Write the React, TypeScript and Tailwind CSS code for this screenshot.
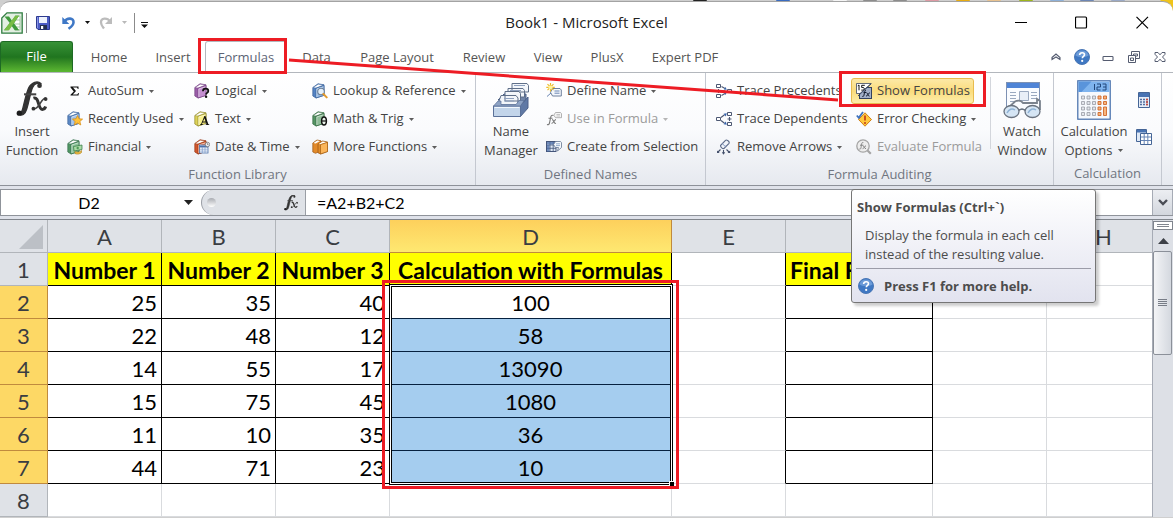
import type { ReactNode } from "react";

/* ---------- icons ---------- */

function Book({ front, side, edge, children }: { front: string; side: string; edge: string; children?: ReactNode }) {
  return (
    <svg viewBox="0 0 16 16" className="h-4 w-4 shrink-0" aria-hidden="true">
      <path d="M.8 4.500 6 .8 12 1.800v10.400L4 15 .8 13z" fill={side} stroke={edge} strokeWidth=".7" />
      <path d="M1.200 4.600 6.200 1.200l5.200.9-7.200 2.900z" fill="#fff" stroke={edge} strokeWidth=".4" />
      <path d="M4 5.200 12 2.600v9.800L4 15z" fill={front} stroke={edge} strokeWidth=".7" />
      <path d="M4.800 6 11.400 3.800M4.800 6v8" stroke="#fff" strokeOpacity=".6" strokeWidth=".8" fill="none" />
      {children}
    </svg>
  );
}

const icons: Record<string, ReactNode> = {
  sum: (
    <svg viewBox="0 0 16 16" className="h-4 w-4 shrink-0" aria-hidden="true">
      <path d="M3.500 3.500h8v2.400h-.8c-.2-1-.6-1.400-1.500-1.400H6l3 3.400-3.200 3.600h3.600c1 0 1.400-.5 1.700-1.500h.8l-.4 2.500h-8v-.8L6.800 8.400 3.500 4.400z" fill="#111" />
    </svg>
  ),
  recent: (
    <Book front="#9dc0ea" side="#5c88c4" edge="#3c649c">
      <path d="m10.500 4.500 1.500 3.300 3.600.3-2.700 2.400.9 3.500-3.300-1.900L7.300 14l.8-3.500L5.400 8.100 9 7.800z" fill="#ffc13a" stroke="#d98a0c" strokeWidth=".7" />
    </Book>
  ),
  financial: (
    <Book front="#8dc49a" side="#4f9563" edge="#35704a">
      <path d="M6.500 7.500 15 6v4.500L7 12z" fill="#a9dba6" stroke="#2f7440" strokeWidth=".7" />
      <circle cx="10.700" cy="9" r="1.200" fill="#4f9b57" />
      <path d="M8 12.500c1.500 1 5 .8 6.500-1v2c-1.500 1.800-5 2-6.500 1z" fill="#f0c14b" stroke="#a87812" strokeWidth=".6" />
    </Book>
  ),
  logical: (
    <Book front="#c48fd0" side="#9a5da8" edge="#744282">
      <path d="M8.900 8.300C9 6.300 10.200 5.700 11.500 5.700c1.800 0 2.800.9 2.800 2.200 0 1.900-2.200 2-2.200 3.500" fill="none" stroke="#111" strokeWidth="1.800" />
      <circle cx="12.100" cy="13.800" r="1.200" fill="#111" />
    </Book>
  ),
  text: (
    <Book front="#f8f08a" side="#ddd258" edge="#8e8629">
      <path d="m6 14 .2-.7h.8L10.400 5h1l3 8.300h.8V14h-3.500v-.7h.8l-.6-1.800H8.600l-.7 1.800h.9V14zm3-3.400h2.600l-1.200-3.400z" fill="#111" />
    </Book>
  ),
  date: (
    <Book front="#ef8457" side="#d2562d" edge="#963715">
      <rect x="5.500" y="6" width="8.500" height="8" fill="#fff" stroke="#4d71ab" strokeWidth=".8" />
      <path d="M5.500 7.500H14" stroke="#4d71ab" strokeWidth="2" />
      <path d="M6 10.200h8M6 12.100h8M8.300 8v6M11 8v6" stroke="#7b9bcc" strokeWidth=".7" />
      <circle cx="13.500" cy="5.500" r="2.200" fill="#f2f4f8" stroke="#666" strokeWidth=".7" />
      <path d="M13.500 4.300v1.300h1" stroke="#444" strokeWidth=".6" fill="none" />
    </Book>
  ),
  lookup: (
    <Book front="#93b8e4" side="#5584c4" edge="#375f98">
      <circle cx="9" cy="8.500" r="3.300" fill="#e4f0fb" stroke="#6d7f96" strokeWidth="1.100" />
      <path d="m11.400 11 3.300 3.400" stroke="#e39a2d" strokeWidth="2" strokeLinecap="round" />
    </Book>
  ),
  math: (
    <Book front="#8fbd98" side="#559464" edge="#32693f">
      <ellipse cx="12" cy="10" rx="2.400" ry="4" fill="#e9f3ea" stroke="#111" strokeWidth="1.500" />
      <path d="M9.800 10h4.400" stroke="#111" strokeWidth="1.200" />
    </Book>
  ),
  more: (
    <svg viewBox="0 0 16 16" className="h-4 w-4 shrink-0" aria-hidden="true">
      <path d="M.8 4 5 1l4 .8V12l-5.500 2.300L.8 13z" fill="#e28a2a" stroke="#9b5510" strokeWidth=".7" />
      <path d="M1.500 4 5.200 1.500 8 2 3.600 4.400z" fill="#fff" />
      <path d="M6 5 10.500 2l5 1v9.500L8.500 15 6 13.800z" fill="#e08c2b" stroke="#9b5510" strokeWidth=".7" />
      <path d="m6.700 5 4-2.500 3.800.7-5.800 2z" fill="#fff" />
      <path d="m8.500 5.600 7-2.300v9.300L8.500 15z" fill="#fbb55a" stroke="#a35d12" strokeWidth=".7" />
    </svg>
  ),
  define: (
    <svg viewBox="0 0 16 16" className="h-4 w-4 shrink-0" aria-hidden="true">
      <path d="M6.500 5.500h7.500l1.300 1.500v6H6.500L4.500 9.300z" fill="#f4f8fd" stroke="#5f7391" strokeWidth=".9" />
      <path d="M8.500 8h5M8.500 10.200h5M1 13.500 5 10" stroke="#5a78a8" strokeWidth=".9" />
      <path d="M4.500 0v8.500M.3 4.300h8.500M1.500 1.200l6 6M7.500 1.200l-6 6" stroke="#eebc2b" strokeWidth="1.200" />
      <circle cx="4.500" cy="4.300" r="1.900" fill="#fff59b" />
    </svg>
  ),
  use: (
    <svg viewBox="0 0 16 16" className="h-4 w-4 shrink-0" aria-hidden="true">
      <path d="M7.500 4.500c-1.900-.9-2.600.3-2.900 2.100L3.500 12c-.4 1.600-1.200 2-2.500 1.400M2.500 7.200h4M6 8.500c2 0 1.500 4.500 4 4M10 8.500c-1.500 0-2.500 4-4.500 4" fill="none" stroke="#7c7c7c" strokeWidth="1.100" />
      <path d="M9.500 1.500h5l1 1.200v4H9.500L7.800 4.200z" fill="#f5f5f5" stroke="#a0a0a0" strokeWidth=".8" />
      <path d="M10.500 3.500h3.500M10.500 5H14" stroke="#b0b0b0" strokeWidth=".7" />
    </svg>
  ),
  create: (
    <svg viewBox="0 0 16 16" className="h-4 w-4 shrink-0" aria-hidden="true">
      <rect x=".5" y="2.500" width="9.500" height="10" fill="#dfe9f6" stroke="#44557a" />
      <path d="M1 6h9M1 9.300h9M4 3v9.500M7.200 3v9.500" stroke="#44557a" strokeWidth=".8" />
      <path d="M1 3h9v2.500H1zM1 6h2.500v6.500H1z" fill="#4a6ba5" fillOpacity=".75" />
      <path d="M9.500 2.500h5l1 1.200v4.800l-4 3.500 1-3.500h-3L7.500 5.600z" fill="#f5f8fc" stroke="#62738f" strokeWidth=".8" />
      <path d="M10 4.800h4M10 6.600h4" stroke="#6c8bb9" strokeWidth=".7" />
    </svg>
  ),
  precedents: (
    <svg viewBox="0 0 16 16" className="h-4 w-4 shrink-0" aria-hidden="true">
      <g fill="#fff" stroke="#4d5873"><path d="M.5 1.500h4v3h-4zM.5 11.500h4v3h-4zM11.500 6.500h4v3h-4z" /></g>
      <path d="M.5 8h4M2.500 6v4M5.500 3.500 9 5.500M5.500 12.500 9 10.500M6 8h3" stroke="#4d5873" strokeWidth="1.100" />
      <path d="m10.800 6.800-3-.3 1.700-2.500zM10.800 9.300l-1.300 2.700-1.700-2.500z" fill="#3763ab" />
    </svg>
  ),
  dependents: (
    <svg viewBox="0 0 16 16" className="h-4 w-4 shrink-0" aria-hidden="true">
      <g fill="#fff" stroke="#4d5873"><path d="M.5 6.500h4v3h-4zM11.500 1.500h4v3h-4zM11.500 11.500h4v3h-4z" /></g>
      <path d="M11.500 8h4M13.500 6v4M5 6.500 8.500 3.800M5 9.500l3.500 2.700" stroke="#4d5873" strokeWidth="1.100" />
      <path d="m10.800 2.300-1 3.200L7.600 2.800zM10.800 13.700l-3.200-.5 2.200-2.700z" fill="#3763ab" />
    </svg>
  ),
  remove: (
    <svg viewBox="0 0 16 16" className="h-4 w-4 shrink-0" aria-hidden="true">
      <path d="m4.500 6.500 5-5.200c1-1 4.500 1.200 3.500 3L8 9.500c-1.500.5-3.500-1.300-3.500-3z" fill="#f1f4fa" stroke="#5d6b89" strokeWidth="1.100" />
      <path d="M6.500 4.500c1 1.800 2 2.500 3.800 3" fill="none" stroke="#7d93bd" />
      <path d="M4.500 10.500 1.500 13.500M7.500 11v3.500M10.500 10.500l3 3" stroke="#44506b" strokeWidth="1.100" />
      <path d="M1 11.500V14h2.700zM5.800 13.300h3.400L7.500 15.800zM14.200 11.500V14h-2.700z" fill="#44506b" />
    </svg>
  ),
  show: (
    <svg viewBox="0 0 16 16" className="h-4 w-4 shrink-0" aria-hidden="true">
      <rect x="3.500" y="4.500" width="12" height="11" fill="#a3b0c8" stroke="#33415c" />
      <path d="M.5.500h14.500L4 10.500H.5z" fill="#fff" stroke="#3e4961" strokeWidth=".8" />
      <path d="M1.800 2.800 3 2v5.300M8.800 2.300H5.700v2.200h1.200c2 0 1.900 2.600-.2 2.600H5.300" fill="none" stroke="#111" strokeWidth="1" />
      <path d="M15.500.5 2 13" stroke="#33415c" strokeWidth=".9" />
      <path d="M10 7.500c-1.300-.3-1.300 1.200-2 4.500-.2 1.300-.7 1.700-1.700 1.400M7.500 9.500h2.700M10.500 9.800c1.500 0 1.200 3.500 3 3.300M13.800 9.800c-1.500 0-2 3.300-3.700 3.300" fill="none" stroke="#111a2c" strokeWidth="1" />
    </svg>
  ),
  error: (
    <svg viewBox="0 0 16 16" className="h-4 w-4 shrink-0" aria-hidden="true">
      <path d="m9 1.800 6.500 6.700L9 15.200 2.500 8.500z" fill="#ffc83d" stroke="#cf7f16" />
      <path d="M9 4.500v5" stroke="#c23b16" strokeWidth="1.700" />
      <circle cx="9" cy="11.900" r="1" fill="#c23b16" />
      <path d="m.8 4.500 2 2.300L7 1" fill="none" stroke="#3e72bd" strokeWidth="1.800" />
    </svg>
  ),
  evaluate: (
    <svg viewBox="0 0 16 16" className="h-4 w-4 shrink-0" aria-hidden="true">
      <circle cx="7" cy="7" r="6.200" fill="#ededed" stroke="#a4a4a4" strokeWidth="1.300" />
      <path d="m11.500 11.500 3.300 3.300" stroke="#a4a4a4" strokeWidth="2.200" />
      <path d="M7.300 3.500C5.500 3 5.700 5 5 8.700c-.3 1.400-.8 1.600-1.700 1.300M4 6.200h3.300M6.800 6.800c1.700 0 1.200 3 3.200 2.800M10 6.800c-1.500 0-1.800 2.900-3.400 2.900" fill="none" stroke="#858585" />
    </svg>
  ),
};

function Caret({ light = false }: { light?: boolean }) {
  return (
    <svg viewBox="0 0 5 3" className="h-[3px] w-[5px] shrink-0" aria-hidden="true">
      <path d="M0 0h5L2.500 3z" fill={light ? "#b5b5b5" : "#5c5c5c"} />
    </svg>
  );
}

function HelpIcon() {
  return (
    <svg viewBox="0 0 16 16" className="h-4 w-4 shrink-0" aria-hidden="true">
      <circle cx="8" cy="8" r="7.500" fill="#3f78c3" stroke="#4a77b5" />
      <path d="M1.500 6.500a6.700 6.700 0 0 1 13 0C11 8.500 5 8.500 1.500 6.500z" fill="#6c9bd8" />
      <path d="M5.600 6c.1-1.600 1.200-2.300 2.500-2.300 1.400 0 2.400.8 2.400 2 0 1.700-2.200 1.800-2.200 3.600" fill="none" stroke="#fff" strokeWidth="1.600" />
      <circle cx="8.200" cy="11.900" r="1.100" fill="#fff" />
    </svg>
  );
}

function FxIcon({ className }: { className: string }) {
  return (
    <svg viewBox="0 0 34 38" className={className} aria-hidden="true">
      <path d="M26 3.500c-1.200-2.500-6-2.800-8.500 3C15 12.500 14 21 11.500 29 10 34.500 6 37 2.500 34.500l.5-1c2 .5 3.500-1.500 4.500-6C9.500 19 11 12 13.500 6.500 16.500.5 23-1.500 26.500 2z" fill="#333" stroke="#333" strokeWidth="1.400" />
      <circle cx="25" cy="4.300" r="2.500" fill="#333" />
      <circle cx="3.500" cy="33.500" r="2.800" fill="#1d1d1d" />
      <path d="M8.500 13.500h13" stroke="#444" strokeWidth="2.200" />
      <path d="M18.500 17.500c6.500-2 4.500 12 9.500 12 1.800 0 3-1.500 3.500-3" fill="none" stroke="#333" strokeWidth="3.200" />
      <path d="M32 17.500c-5-1.500-7.500 13-13.500 11.500" fill="none" stroke="#444" strokeWidth="1.700" />
      <circle cx="31.500" cy="18.500" r="2" fill="#333" />
      <circle cx="18.500" cy="28.800" r="2" fill="#333" />
    </svg>
  );
}

/* ---------- title bar ---------- */

function TitleBar() {
  return (
    <header className="relative flex h-[39px] items-center px-px pt-0.5">
      <svg viewBox="0 0 22 22" className="h-[22px] w-[22px]" aria-hidden="true">
        <path d="M6 .8h15.200v20.400H.8V6z" fill="#e3efe2" stroke="#2f7d40" strokeWidth="1.300" />
        <path d="M14 4h5v14h-5M14 8h5M14 12h5M14 15h5" stroke="#94bd94" fill="#fff" strokeWidth=".8" />
        <path d="M3.500 4.500H8l3 4.300 3.300-5H18l-5 7.400 5.200 7H13.700l-3-4.300-3.200 4.300H3L8.800 11z" fill="#3f9a3d" />
        <path d="M14.300 3.800H18L8 18.200H3z" fill="#79bd45" />
      </svg>
      <span className="ml-[3px] h-5 w-px bg-[#8b8b8b]" />
      <button type="button" aria-label="Save" className="ml-[9px]">
        <svg viewBox="0 0 14 14" className="h-[14px] w-[14px]" aria-hidden="true">
          <path d="M.5.500h13v13H2L.5 12z" fill="#4c5cc4" stroke="#2d3a8e" />
          <path d="M3 1h8v6H3z" fill="#eef2fc" />
          <path d="M1.500 1v11" stroke="#8794e6" />
          <path d="M4 9h7v4.500H4z" fill="#25304f" />
          <path d="M5 10h2.200v3H5z" fill="#fff" />
        </svg>
      </button>
      <button type="button" aria-label="Undo" className="ml-[12px]">
        <svg viewBox="0 0 14 14" className="h-[14px] w-[14px]" aria-hidden="true">
          <path d="M2.500 5.500C5 1.500 12 1.500 11.500 6.500 11.300 9.500 9 11 6.500 12.800" fill="none" stroke="#3f78c6" strokeWidth="2.600" />
          <path d="M.3 1v7h7z" fill="#3f78c6" />
        </svg>
      </button>
      <svg viewBox="0 0 5 3" className="ml-[9px] h-[3px] w-[5px]" aria-hidden="true"><path d="M0 0h5L2.500 3z" fill="#111" /></svg>
      <button type="button" aria-label="Redo" className="ml-[9px]">
        <svg viewBox="0 0 14 14" className="h-[14px] w-[14px]" aria-hidden="true">
          <path d="M11 5.500C8.500 1.500 1.800 1.500 2 6.500c.2 3 1.500 4 3 6" fill="none" stroke="#bcbcbc" strokeWidth="2.300" />
          <path d="M13 1v7H6z" fill="#bcbcbc" />
        </svg>
      </button>
      <svg viewBox="0 0 5 3" className="ml-[9px] h-[3px] w-[5px]" aria-hidden="true"><path d="M0 0h5L2.500 3z" fill="#b9b9b9" /></svg>
      <span className="ml-[7px] h-5 w-px bg-[#8b8b8b]" />
      <button type="button" aria-label="Customize Quick Access Toolbar" className="ml-[6px] pt-1">
        <svg viewBox="0 0 7 6" className="h-[6px] w-[7px]" aria-hidden="true"><path d="M0 0h7v1H0zM0 2.500h7L3.500 6z" fill="#111" /></svg>
      </button>
      <h1 className="pointer-events-none absolute inset-x-0 top-2.5 text-center text-[15px] leading-[20px] text-[#222]">Book1 - Microsoft Excel</h1>
      <div className="ml-auto flex items-center gap-12 pr-[23px]">
        <button type="button" aria-label="Minimize">
          <svg viewBox="0 0 13 13" className="h-[13px] w-[13px]" aria-hidden="true"><path d="M1 6.500h12" stroke="#000" /></svg>
        </button>
        <button type="button" aria-label="Maximize">
          <svg viewBox="0 0 13 13" className="h-[13px] w-[13px]" aria-hidden="true"><rect x=".5" y="1" width="11" height="11" rx="1" fill="none" stroke="#000" strokeWidth="1.200" /></svg>
        </button>
        <button type="button" aria-label="Close">
          <svg viewBox="0 0 13 13" className="h-[13px] w-[13px]" aria-hidden="true"><path d="m.5.800 11.500 11.500m0-11.500-11.500 11.500" stroke="#000" strokeWidth="1.200" /></svg>
        </button>
      </div>
    </header>
  );
}

/* ---------- tabs ---------- */

const tabs = [
  { name: "Home", w: "w-[64px]" },
  { name: "Insert", w: "w-[64px]" },
  { name: "Formulas", w: "w-[82px]" },
  { name: "Data", w: "w-[59px]" },
  { name: "Page Layout", w: "w-[102px]" },
  { name: "Review", w: "w-[72px]" },
  { name: "View", w: "w-[56px]" },
  { name: "PlusX", w: "w-[62px]" },
  { name: "Expert PDF", w: "w-[94px]" },
];

function TabBar() {
  return (
    <nav className="flex h-8 items-end border-b border-[#b3b7bd] text-[13px] text-[#555]">
      <button type="button" className="mr-1 h-[31px] w-[73px] rounded-t-[3px] border border-b-0 border-[#1d6a24] bg-linear-to-b from-[#379237] via-[#20751f] to-[#5cb832] text-white">
        File
      </button>
      {tabs.map((t) => (
        <div key={t.name} className={`relative flex h-[31px] ${t.w}`}>
          <button
            type="button"
            className={`w-full pt-0.5 ${t.name === "Formulas" ? "rounded-t-[3px] border border-b-0 border-[#b3b7bd] bg-white text-[#5c6475]" : ""}`}
          >
            {t.name}
          </button>
          {t.name === "Formulas" && <span className="pointer-events-none absolute -top-[3px] -left-[7px] z-10 h-[36px] w-[89px] border-3 border-[#ed1c24]" />}
        </div>
      ))}
      <div className="mb-[7px] ml-auto flex items-center gap-[10px] pr-[5px]">
        <button type="button" aria-label="Minimize the Ribbon">
          <svg viewBox="0 0 16 16" className="h-4 w-4" aria-hidden="true"><path d="M4 8.500 8 5l4 3.500v2L8 8l-4 2.500z" fill="#fff" stroke="#555c70" strokeWidth="1.100" /></svg>
        </button>
        <button type="button" aria-label="Help"><HelpIcon /></button>
        <button type="button" aria-label="Minimize Window">
          <svg viewBox="0 0 16 16" className="h-4 w-4" aria-hidden="true"><rect x="3" y="7.500" width="10" height="4" rx=".8" fill="#fff" stroke="#555c70" strokeWidth="1.100" /></svg>
        </button>
        <button type="button" aria-label="Restore Window">
          <svg viewBox="0 0 16 16" className="h-4 w-4" aria-hidden="true"><path d="M5.500 2.500h8v7h-8zM7.500 5h4v2h-4z" fill="#fff" stroke="#555c70" /><path d="M2.500 6.500h7v7h-7zM4.500 9h3v2.500h-3z" fill="#fff" stroke="#555c70" /></svg>
        </button>
        <button type="button" aria-label="Close Window">
          <svg viewBox="0 0 16 16" className="h-4 w-4" aria-hidden="true"><path d="M3 3.500h3l2 2.300 2-2.300h3v1.800L10.500 8l2.500 2.700v1.800h-3l-2-2.300-2 2.300H3v-1.800L5.500 8 3 5.300z" fill="#fff" stroke="#555c70" /></svg>
        </button>
      </div>
    </nav>
  );
}

/* ---------- ribbon ---------- */

function Command({ icon, label, caret = false, disabled = false }: { icon: string; label: string; caret?: boolean; disabled?: boolean }) {
  return (
    <button
      type="button"
      disabled={disabled}
      className={`flex h-7 items-center gap-[5px] whitespace-nowrap ${disabled ? "text-[#9b9b9b]" : "text-[#444]"}`}
    >
      {icons[icon]}
      <span>{label}</span>
      {caret && <Caret light={disabled} />}
    </button>
  );
}

function BigCommand({ label, width, caret = false, children }: { label: [string, string]; width: string; caret?: boolean; children: ReactNode }) {
  return (
    <button type="button" className={`flex shrink-0 flex-col items-center leading-[19px] text-[#444] ${width}`}>
      <span className="flex h-[45px] items-center">{children}</span>
      <span>{label[0]}</span>
      <span className="flex items-center gap-1.5">{label[1]}{caret && <Caret />}</span>
    </button>
  );
}

function Group({ title, width, children }: { title: string; width: string; children: ReactNode }) {
  return (
    <section className={`flex shrink-0 flex-col border-r border-[#c4c8d0] pt-1 ${width}`}>
      <div className="flex h-[84px]">{children}</div>
      <h2 className="pt-px text-center leading-[24px] text-[#70757f]">{title}</h2>
    </section>
  );
}

function Ribbon() {
  return (
    <div className="flex h-[113px] border-b border-[#8d9199] bg-linear-to-b from-white via-[#fafbfd] to-[#e6e9ef] text-[13px]">
      <Group title="Function Library" width="w-[476px]">
        <BigCommand label={["Insert", "Function"]} width="w-[64px]"><FxIcon className="h-[37px] w-[32px]" /></BigCommand>
        <div className="ml-[3px] w-[127px]">
          <Command icon="sum" label="AutoSum" caret />
          <Command icon="recent" label="Recently Used" caret />
          <Command icon="financial" label="Financial" caret />
        </div>
        <div className="w-[118px]">
          <Command icon="logical" label="Logical" caret />
          <Command icon="text" label="Text" caret />
          <Command icon="date" label="Date & Time" caret />
        </div>
        <div>
          <Command icon="lookup" label="Lookup & Reference" caret />
          <Command icon="math" label="Math & Trig" caret />
          <Command icon="more" label="More Functions" caret />
        </div>
      </Group>
      <Group title="Defined Names" width="w-[230px]">
        <BigCommand label={["Name", "Manager"]} width="w-[70px]">
          <svg viewBox="0 0 38 36" className="h-[36px] w-[38px]" aria-hidden="true">
            <path d="M6 18 12 12h22v8z" fill="#7185a8" stroke="#4c6189" />
            <g fill="#f3f6fa" stroke="#5f6f88">
              <path d="M20 1.500h15l1.500 2V10H20zM16 6.500h15l1.500 2V15H16z" />
              <path d="M13 9.500h14l1.500 2V19H13zM9 13.500h15l2 2.500V23H9l-2-4z" />
            </g>
            <path d="M22 3.500h11M18 8.500h11M12 16.500h10M12 19h10" stroke="#8fa1be" />
            <path d="m28 24 8-9v11l-8 9z" fill="#6079a5" stroke="#4c6189" />
            <path d="M1.500 24h27v10.500h-27z" fill="#c3d5ea" stroke="#5b7199" />
            <path d="M1.500 24 6 19h3v3.500h15l3-4h5L28.500 24z" fill="#8ea3c4" stroke="#5b7199" strokeWidth=".7" />
            <path d="M2.500 25.500h25" stroke="#f1f7fd" />
          </svg>
        </BigCommand>
        <div>
          <Command icon="define" label="Define Name" caret />
          <Command icon="use" label="Use in Formula" caret disabled />
          <Command icon="create" label="Create from Selection" />
        </div>
      </Group>
      <Group title="Formula Auditing" width="w-[348px]">
        <div className="ml-[10px] w-[135px]">
          <Command icon="precedents" label="Trace Precedents" />
          <Command icon="dependents" label="Trace Dependents" />
          <Command icon="remove" label="Remove Arrows" caret />
        </div>
        <div className="w-[139px]">
          <div className="relative flex h-7 items-center">
            <button type="button" className="flex h-[26px] w-[123px] items-center gap-[5px] rounded-[3px] border border-[#e8bc4e] bg-linear-to-b from-[#fce9a6] via-[#fbdc7c] to-[#fdeeaa] pl-1 whitespace-nowrap text-[#444]">
              {icons.show}
              <span>Show Formulas</span>
            </button>
            <span className="pointer-events-none absolute -top-[6px] -left-[12px] h-[36px] w-[147px] border-3 border-[#ed1c24]" />
          </div>
          <div className="pl-[5px]">
            <Command icon="error" label="Error Checking" caret />
            <Command icon="evaluate" label="Evaluate Formula" disabled />
          </div>
        </div>
        <div className="h-[72px] w-px bg-[#d3d6dc]" />
        <BigCommand label={["Watch", "Window"]} width="w-[62px]">
          <svg viewBox="0 0 40 38" className="h-[38px] w-[40px]" aria-hidden="true">
            <rect x="4.500" y="1.500" width="33" height="27" fill="#fafcff" stroke="#7d91b3" />
            <path d="M5 2h32v5H5z" fill="#4f84d6" />
            <path d="M8 11.500h6M8 14.500h6M8 17.500h6M8 20.500h6M29 11.500h6M29 14.500h6M29 17.500h6" stroke="#9aa9c0" />
            <path d="M17.500 10.500h9v9h-9z" fill="#e8eef7" stroke="#9aa9c0" />
            <path d="M5 28 13 20.500c4-2 7 0 8 1.500h14V18l3 2v9" fill="none" stroke="#7b838e" strokeWidth="1.800" />
            <ellipse cx="9.500" cy="30.500" rx="7.500" ry="6" fill="#d5e5f4" stroke="#69727e" strokeWidth="1.300" />
            <ellipse cx="30.500" cy="30.500" rx="7.500" ry="6" fill="#d5e5f4" stroke="#69727e" strokeWidth="1.300" />
            <path d="M17 29.500c2-2 4-2 6 0" fill="none" stroke="#69727e" strokeWidth="1.600" />
            <path d="M5 32c2-4 5-5 8-3M26 32c2-4 5-5 8-3" fill="none" stroke="#8fb3d6" strokeWidth="1.500" />
          </svg>
        </BigCommand>
      </Group>
      <Group title="Calculation" width="w-[108px]">
        <BigCommand label={["Calculation", "Options"]} width="w-[80px]" caret>
          <svg viewBox="0 0 34 40" className="h-[40px] w-[34px]" aria-hidden="true">
            <rect x=".8" y=".8" width="32.400" height="38.400" fill="#f6f9fd" stroke="#426ca9" strokeWidth="1.200" />
            <path d="M1.500 1.500h31v10.500h-31z" fill="#7fb4ee" />
            <path d="M1.500 1.500h13l-10 10.500h-3z" fill="#5994db" />
            <path d="M17.500 4v6M20 4h3.500v3H20v3h3.500M25.500 4H29v6h-3.500M26 7h3" fill="none" stroke="#23477b" />
            <g fill="#e3e6ec" stroke="#989ca5" strokeWidth=".8">
              <path d="M4.500 16h3v3h-3zM10 16h3v3h-3zM15.500 16h3v3h-3zM4.500 21.500h3v3h-3zM10 21.500h3v3h-3zM15.500 21.500h3v3h-3zM4.500 27h3v3h-3zM10 27h3v3h-3zM15.500 27h3v3h-3zM4.500 32.500h3v3h-3zM10 32.500h3v3h-3zM15.500 32.500h3v3h-3z" />
            </g>
            <path d="M21 16h3v3h-3zM26.500 16h3v3h-3zM21 21.500h3v3h-3zM26.500 21.500h3v3h-3zM21 27h3v3h-3zM26.500 27h3v8.500h-3zM21 32.500h3v3h-3z" fill="#f7b47c" stroke="#cf6a2c" strokeWidth=".9" />
          </svg>
        </BigCommand>
        <div className="flex w-5 flex-col items-center gap-[20px] pt-[14px]">
          <button type="button" aria-label="Calculate Now">
            <svg viewBox="0 0 16 18" className="h-[18px] w-[16px]" aria-hidden="true">
              <path d="M2.500 1.500h11v15h-11z" fill="#e6edf8" stroke="#456596" />
              <path d="M3 2h10v4H3z" fill="#4873b3" />
              <path d="M4 8.500h8M4 11h8M4 13.500h8" stroke="#5370a0" strokeWidth="1.400" strokeDasharray="2 1" />
              <path d="M10 8.500h2M10 11h2M10 13.500h2" stroke="#d04a3a" strokeWidth="1.400" />
            </svg>
          </button>
          <button type="button" aria-label="Calculate Sheet">
            <svg viewBox="0 0 16 16" className="h-4 w-4" aria-hidden="true">
              <path d="M.5.500h10v12H.5z" fill="#dfe9f6" stroke="#456596" />
              <path d="M1 1h9v2.500H1z" fill="#4873b3" />
              <path d="M4.500 4.500h11v11h-11z" fill="#fff" stroke="#456596" />
              <path d="M5 8h10M5 11.500h10M8.200 5v10M11.800 5v10" stroke="#6685b5" />
            </svg>
          </button>
        </div>
      </Group>
      <div className="flex-1" />
    </div>
  );
}

/* ---------- formula bar ---------- */

function FormulaBar() {
  return (
    <div className="bg-[#dfe2ea] pt-[3px] pb-[3px]">
      <div className="flex h-[27px] border-y border-[#8f939a] bg-white font-[Lato,'Liberation_Sans',sans-serif] text-[16px] text-black">
        <input aria-label="Name Box" defaultValue="D2" className="w-[177px] border-l border-[#8f939a] bg-transparent text-center outline-none" />
        <button type="button" aria-label="Name Box list" className="flex w-[24px] items-center justify-center pr-0.5">
          <svg viewBox="0 0 9 5" className="h-[5px] w-[9px]" aria-hidden="true"><path d="M0 0h9L4.500 5z" fill="#222" /></svg>
        </button>
        <div className="flex w-[105px] items-center justify-between rounded-l-full border-x border-[#9a9ea5] bg-[#dfe2e7] pr-[6px] pl-[5px]">
          <span className="h-[9px] w-[9px] rounded-full bg-linear-to-b from-[#a9acb2] to-white" />
          <button type="button" aria-label="Insert Function"><FxIcon className="h-[16px] w-[16px]" /></button>
        </div>
        <input aria-label="Formula" defaultValue="=A2+B2+C2" className="min-w-0 flex-1 bg-transparent pl-[11px] outline-none" />
        <button type="button" aria-label="Expand Formula Bar" className="flex w-[21px] items-center justify-center border border-y-0 border-[#a6abb5] bg-linear-to-b from-[#eceef2] to-[#d3d7de]">
          <svg viewBox="0 0 10 7" className="h-[7px] w-[10px]" aria-hidden="true"><path d="m1 1 4 4 4-4" fill="none" stroke="#4a4d55" strokeWidth="2.400" /></svg>
        </button>
      </div>
    </div>
  );
}

/* ---------- sheet ---------- */

const rows: { a: string; b: string; c: string; d: string }[] = [
  { a: "25", b: "35", c: "40", d: "100" },
  { a: "22", b: "48", c: "12", d: "58" },
  { a: "14", b: "55", c: "17", d: "13090" },
  { a: "15", b: "75", c: "45", d: "1080" },
  { a: "11", b: "10", c: "35", d: "36" },
  { a: "44", b: "71", c: "23", d: "10" },
];

const cell = "border-r border-b px-0 pb-0 pt-0.5";
const rowHead = `${cell} text-center font-normal text-[#3a3d42]`;
const plainHead = "border-[#b1b5ba] bg-[#dfe2e7]";
const activeHead = "border-[#c08a3e] bg-[#fdd865]";
const titleCell = `${cell} border-black bg-[#ffff00] text-center text-[23px] font-bold whitespace-nowrap`;
const numberCell = "border-r border-b border-black pt-0.5 pr-1 pb-0 pl-0 text-right";
const inked = "border-black";
const faint = "border-[#d9dbde]";

function Sheet() {
  return (
    <table className="w-full min-w-[1161px] table-fixed border-separate border-spacing-0 font-[Lato,'Liberation_Sans',sans-serif] text-[22px] leading-[30px] text-black">
      <colgroup>
        <col className="w-[48px]" />
        <col className="w-[114px]" />
        <col className="w-[114px]" />
        <col className="w-[114px]" />
        <col className="w-[282px]" />
        <col className="w-[114px]" />
        <col className="w-[147px]" />
        <col className="w-[114px]" />
        <col />
      </colgroup>
      <thead>
        <tr className="h-[33px]">
          <td className={`${cell} ${plainHead}`}>
            <svg viewBox="0 0 24 24" className="mr-1 ml-auto h-6 w-6" aria-hidden="true"><path d="M24 0v24H0z" fill="#bcc0c6" /></svg>
          </td>
          {["A", "B", "C", "D", "E", "F", "G", "H"].map((c) => (
            <th
              key={c}
              scope="col"
              className={`${rowHead} ${c === "D" ? "border-[#c08a3e] bg-linear-to-b from-[#fdd05c] to-[#fee871]" : plainHead}`}
            >
              {c}
            </th>
          ))}
        </tr>
      </thead>
      <tbody>
        <tr className="h-[33px]">
          <th scope="row" className={`${rowHead} ${plainHead}`}>1</th>
          {["Number 1", "Number 2", "Number 3", "Calculation with Formulas"].map((t) => (
            <td key={t} className={titleCell}>{t}</td>
          ))}
          <td className="border-r border-b border-r-black border-b-[#d9dbde] p-0" />
          <td className={titleCell}>Final Formula</td>
          <td className={`${cell} ${faint}`} />
          <td className={`${cell} ${faint}`} />
        </tr>
        {rows.map((r, i) => (
          <tr key={i} className="h-[33px]">
            <th scope="row" className={`${rowHead} ${activeHead}`}>{i + 2}</th>
            <td className={numberCell}>{r.a}</td>
            <td className={numberCell}>{r.b}</td>
            <td className={numberCell}>{r.c}</td>
            <td className={`${cell} relative border-[#06213f] text-center ${i === 0 ? "bg-white" : "bg-[#a5cdef]"}`}>
              {r.d}
              {i === 0 && (
                <>
                  <span className="pointer-events-none absolute -top-[2px] -left-px z-10 h-[201px] w-[284px] border border-black">
                    <span className="block h-full border border-white">
                      <span className="block h-full border border-black" />
                    </span>
                  </span>
                  <span className="pointer-events-none absolute top-[195px] left-[279px] z-10 h-[5px] w-[5px] border-t border-l border-white bg-black" />
                  <span className="pointer-events-none absolute -top-[6px] -left-[8px] z-10 h-[209px] w-[297px] border-3 border-[#ed1c24]" />
                </>
              )}
            </td>
            <td className="border-r border-b border-r-black border-b-[#d9dbde] p-0" />
            <td className={`${cell} ${inked}`} />
            <td className={`${cell} ${faint}`} />
            <td className={`${cell} ${faint}`} />
          </tr>
        ))}
        <tr className="h-[33px]">
          <th scope="row" className={`${rowHead} ${plainHead}`}>8</th>
          {["A", "B", "C", "D", "E", "F", "G", "H"].map((c) => (
            <td key={c} className={`${cell} ${faint}`} />
          ))}
        </tr>
      </tbody>
    </table>
  );
}

function ScrollBar() {
  return (
    <div className="flex w-[21px] shrink-0 flex-col border-l border-[#a6abb5] bg-[#dde0e6]">
      <div className="mt-px flex h-[9px] items-center justify-center border border-[#80858e] bg-white">
        <span className="h-[3px] w-3 border-y border-[#80858e]" />
      </div>
      <button type="button" aria-label="Scroll up" className="flex h-[21px] items-center justify-center">
        <svg viewBox="0 0 11 6" className="h-[6px] w-[11px]" aria-hidden="true"><path d="M0 6h11L5.500 0z" fill="#3d4047" /></svg>
      </button>
      <div className="mr-px flex h-[104px] items-center justify-center rounded-[2px] border border-[#8b9099] bg-linear-to-r from-[#f3f4f6] to-[#d4d8df]">
        <svg viewBox="0 0 9 8" className="h-2 w-[9px]" aria-hidden="true"><path d="M0 .5h9M0 2.500h9M0 4.500h9M0 6.500h9" stroke="#787d87" /></svg>
      </div>
    </div>
  );
}

/* ---------- overlays ---------- */

function Tooltip() {
  return (
    <div role="tooltip" className="absolute top-[189px] left-[851px] z-20 w-[245px] rounded-[3px] border border-[#767676] bg-linear-to-b from-white to-[#e2e3ef] px-1 pt-[5px] pb-1 text-[13px] text-[#4c4c4c] shadow-[3px_3px_3px_rgba(0,0,0,0.2)]">
      <p className="pl-px leading-[24px] font-bold">Show Formulas (Ctrl+`)</p>
      <p className="pt-[7px] pb-1 pl-[9px] leading-[19px] whitespace-nowrap">
        Display the formula in each cell
        <br />
        instead of the resulting value.
      </p>
      <p className="flex items-center gap-[10px] border-t border-[#9b9ca8] pt-[5px] pl-[2px] leading-[24px] font-bold">
        <HelpIcon />
        Press F1 for more help.
      </p>
    </div>
  );
}

const backdropDots = [
  { x: 700, c: "#222" }, { x: 783, c: "#3a6cc0" }, { x: 840, c: "#f5f5f5" }, { x: 870, c: "#8c8c8c" }, { x: 900, c: "#8c8c8c" },
  { x: 932, c: "#dd9aa4" }, { x: 963, c: "#e8ac12" }, { x: 994, c: "#e8c290" }, { x: 1026, c: "#9db51c" },
  { x: 1057, c: "#8db0d8" }, { x: 1087, c: "#6d86b4" }, { x: 1118, c: "#9aa9c6" },
];

export default function App() {
  return (
    <div className="relative min-h-screen overflow-hidden bg-[#cfcfcf] font-['Open_Sans','Noto_Sans',sans-serif]">
      <svg className="absolute top-0 left-0 h-3 w-[1173px]" viewBox="0 0 1173 12" aria-hidden="true">
        {backdropDots.map((d) => (
          <ellipse key={d.x} cx={d.x} cy="0" rx="7" ry="2.500" fill={d.c} />
        ))}
        <path d="M1160 0h13v12z" fill="#f0c419" />
      </svg>
      <div className="relative mt-px rounded-t-[10px] border-t border-[#a3a3a3] bg-white">
        <TitleBar />
        <TabBar />
        <Ribbon />
        <FormulaBar />
        <div className="flex border-t border-[#80858c]">
          <div className="min-w-0 flex-1 overflow-hidden"><Sheet /></div>
          <ScrollBar />
        </div>
      </div>
      <Tooltip />
      <svg className="pointer-events-none absolute top-0 left-0 z-10 h-[110px] w-[850px]" viewBox="0 0 850 110" aria-hidden="true">
        <path d="M289 60 838 100" stroke="#ed1c24" strokeWidth="3" />
      </svg>
    </div>
  );
}
